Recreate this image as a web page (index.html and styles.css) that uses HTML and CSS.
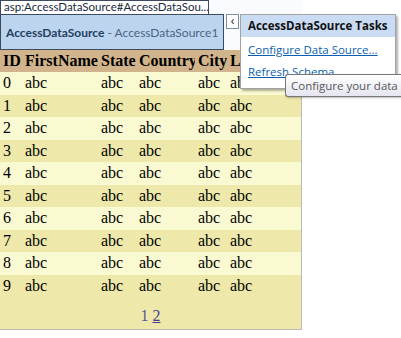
FILE: index.html
```html
<!DOCTYPE html>
<html lang="en">
<head>
  <meta charset="UTF-8" />
  <title>AccessDataSource Designer</title>
  <link rel="stylesheet" href="styles.css">
</head>
<body>
  <div class="surface">
    <div class="ctl-label">asp:AccessDataSource#AccessDataSou...</div>
    <div class="ds-box"><span class="ds-type">AccessDataSource</span><span class="ds-id">&nbsp;- AccessDataSource1</span></div>
    <div class="grid-wrap">
      <table class="grid">
        <colgroup>
          <col style="width:22px"><col style="width:76px"><col style="width:38px">
          <col style="width:59px"><col style="width:32px"><col style="width:74px">
        </colgroup>
        <thead>
          <tr><th>ID</th><th>FirstName</th><th>State</th><th>Country</th><th>City</th><th>LastName</th></tr>
        </thead>
        <tbody id="rows"></tbody>
        <tfoot>
          <tr class="pager"><td colspan="6"><span>1</span> <a href="#">2</a></td></tr>
        </tfoot>
      </table>
    </div>
  </div>

  <!-- smart tag panel, drawn over the designer -->
  <div class="smart-tag">&lsaquo;</div>
  <div class="tasks">
    <div class="tasks-head">AccessDataSource Tasks</div>
    <a href="#" class="task-link">Configure Data Source...</a>
    <a href="#" class="task-link">Refresh Schema</a>
  </div>
  <div class="tooltip">Configure your data source</div>

  <script>
    // Fill the grid with placeholder rows
    const body = document.getElementById('rows');
    for (let i = 0; i < 10; i++) {
      const tr = document.createElement('tr');
      tr.className = i % 2 ? 'alt' : '';
      tr.innerHTML = `<td>${i}</td><td>abc</td><td>abc</td><td>abc</td><td>abc</td><td>abc</td>`;
      body.appendChild(tr);
    }
  </script>
</body>
</html>
```

FILE: styles.css
```css
html, body {
  margin: 0;
  padding: 0;
  overflow: hidden;
  background-color: #fff;
}
body {
  width: 401px;
  height: 338px;
  position: relative;
  font-family: "Open Sans", Arial, sans-serif;
}
.surface {
  width: 302px;
  background-color: #fafbfe;
}
.ctl-label {
  box-sizing: border-box;
  width: 209px;
  height: 14px;
  border: 1px solid #3c4a5c;
  border-bottom: none;
  background-color: #fff;
  color: #1a2a3c;
  font-family: Lato, "Open Sans", sans-serif;
  font-size: 11.5px;
  line-height: 12px;
  padding-left: 3px;
  white-space: nowrap;
  overflow: hidden;
}
.ds-box {
  box-sizing: border-box;
  width: 224px;
  height: 36px;
  border: 1px solid #3c4a5c;
  background-color: #bdd4ee;
  display: flex;
  align-items: center;
  padding-left: 5px;
  font-family: Lato, "Open Sans", sans-serif;
  font-size: 12px;
  white-space: nowrap;
}
.ds-type {
  font-weight: bold;
  color: #23405f;
}
.ds-id {
  color: #4a6583;
}
.grid-wrap {
  box-sizing: border-box;
  width: 302px;
  border-right: 1px solid #b9b9b9;
  border-bottom: 1px solid #b9b9b9;
  overflow: hidden;
}
.grid {
  width: 301px;
  table-layout: fixed;
  border-collapse: collapse;
  font-family: "Liberation Serif", "Times New Roman", serif;
  font-size: 16px;
  color: #000;
  background-color: #fafad2;
}
.grid th,
.grid td {
  padding: 0 3px;
  text-align: left;
  white-space: nowrap;
  overflow: hidden;
}
.grid thead tr {
  height: 22px;
  background-color: #d2b48c;
}
.grid tbody tr {
  height: 22.5px;
}
.grid tr.alt {
  background-color: #eee8aa;
}
.grid tr.pager {
  height: 32px;
  background-color: #eee8aa;
}
.grid tr.pager td {
  text-align: center;
  vertical-align: top;
  color: #5b5690;
  padding-top: 10px;
}
.grid tr.pager a {
  color: #483d8b;
}
.smart-tag {
  position: absolute;
  left: 226px;
  top: 14px;
  box-sizing: border-box;
  width: 13px;
  height: 15px;
  border: 1px solid #7d8ea3;
  background-color: #fff;
  color: #222;
  font-size: 12px;
  line-height: 12px;
  text-align: center;
}
.tasks {
  position: absolute;
  left: 240px;
  top: 14px;
  box-sizing: border-box;
  width: 156px;
  height: 75px;
  border: 1px solid #a3a3a3;
  background-color: #fff;
  box-shadow: 2px 2px 2px rgba(0, 0, 0, 0.3);
}
.tasks-head {
  height: 22px;
  line-height: 22px;
  background-color: #c9dcf3;
  padding-left: 7px;
  font-size: 11.5px;
  font-weight: bold;
  color: #111;
}
.task-link {
  display: block;
  padding-left: 7px;
  margin-top: 3px;
  font-size: 11.5px;
  line-height: 19px;
  color: #0a5fb0;
}
.tooltip {
  position: absolute;
  left: 285px;
  top: 74px;
  box-sizing: border-box;
  width: 116px;
  height: 23px;
  border: 1px solid #767676;
  border-right: none;
  border-radius: 3px 0 0 3px;
  background: linear-gradient(#ffffff, #e4e5f0);
  box-shadow: 1px 1px 2px rgba(0, 0, 0, 0.25);
  color: #575757;
  font-size: 11.5px;
  line-height: 21px;
  padding-left: 5px;
  white-space: nowrap;
  overflow: hidden;
}
```
